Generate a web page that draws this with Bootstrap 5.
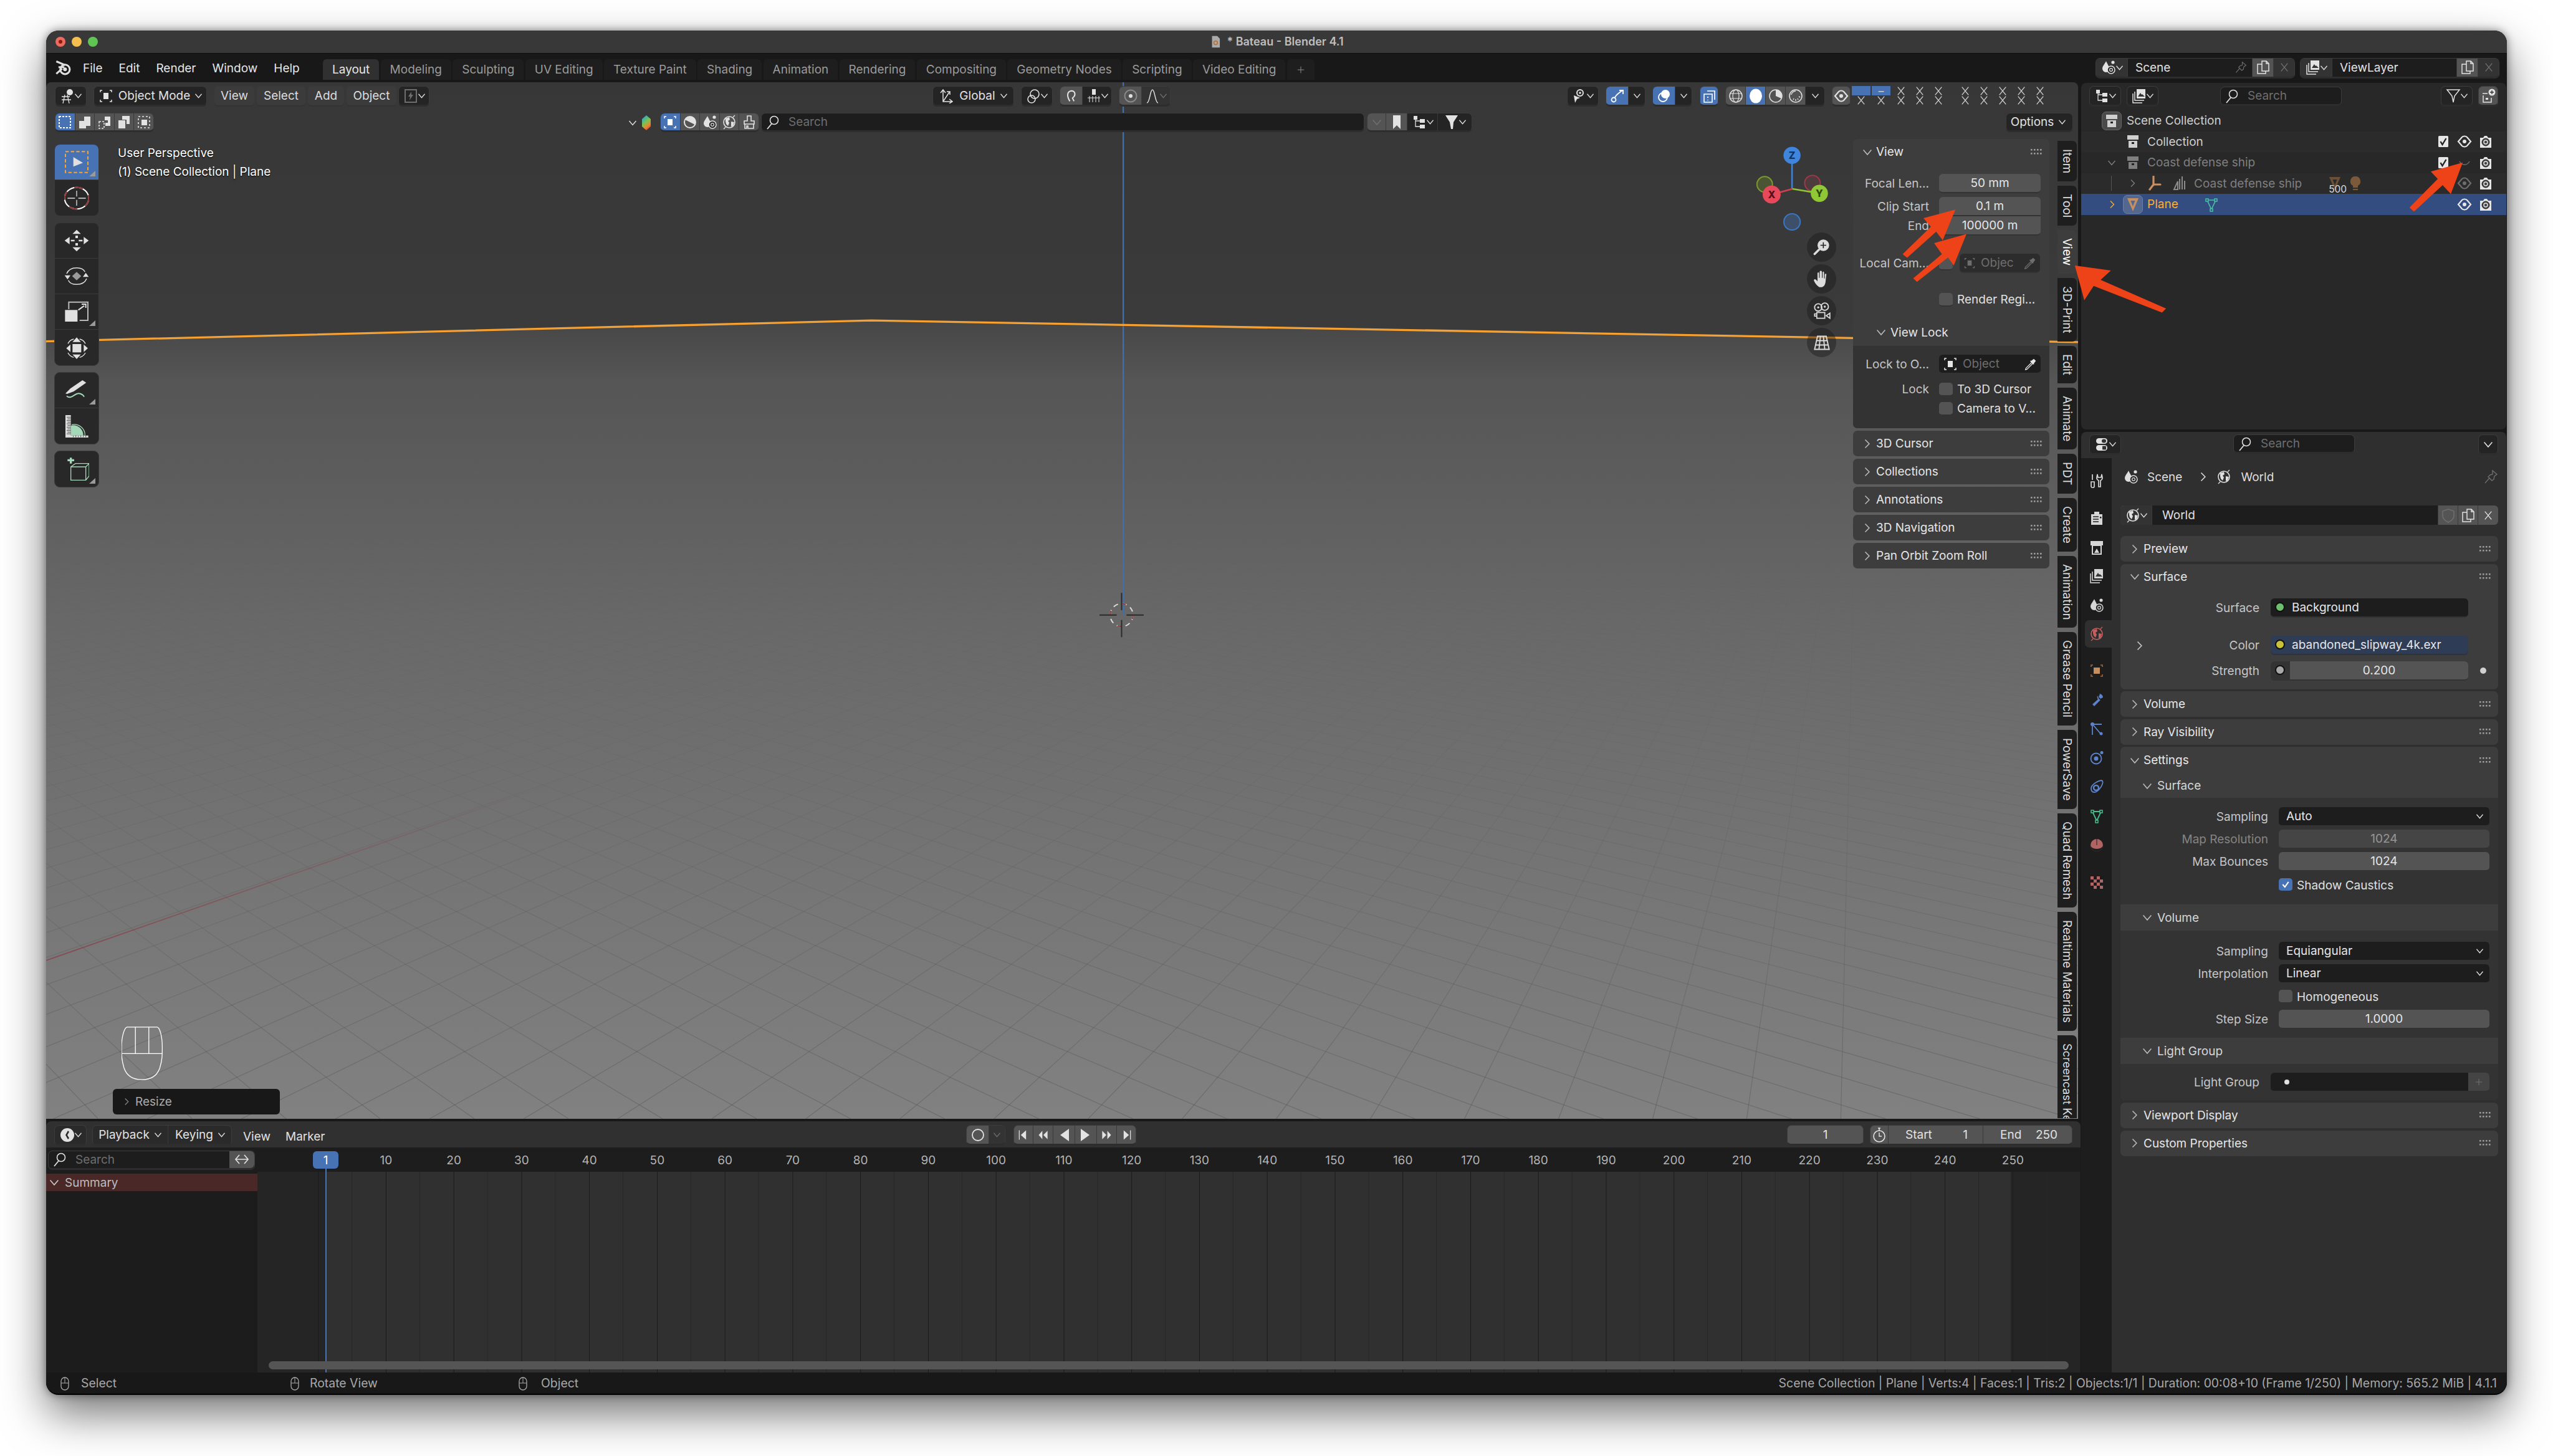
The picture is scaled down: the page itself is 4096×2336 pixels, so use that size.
<!DOCTYPE html>
<html lang="en">
<head>
<meta charset="utf-8">
<title>Bateau - Blender 4.1</title>
<link href="https://cdn.jsdelivr.net/npm/bootstrap@5.3.0/dist/css/bootstrap.min.css" rel="stylesheet">
<style>
html,body{width:4096px;height:2336px;margin:0;background:#fff;overflow:hidden}
body{font-family:Inter,"Liberation Sans",sans-serif;font-size:19px;line-height:1;color:#e0e0e0}
svg{display:block;flex:none}
.bl-win{position:absolute;left:74px;top:49px;width:3948px;height:2189px;border-radius:20px;overflow:hidden;background:#181818;box-shadow:0 30px 70px rgba(0,0,0,.55),0 0 14px rgba(0,0,0,.45);border-bottom:2px solid #000}
.bl-title{height:37px;background:#383838;border-bottom:1px solid #0d0d0d;position:relative;flex:none}
.tl{width:16px;height:16px;border-radius:50%;margin-right:10px}
.tl-r{background:#ed6a5f}.tl-y{background:#f5bf4f}.tl-g{background:#61c554}
.tl-r::after{content:"";display:block;width:6px;height:6px;border-radius:50%;background:#8c1a10;margin:5px}
.bl-wt{color:#bfbfbf;font-weight:600;font-size:18px}
.bl-top{height:46px;background:#181818;flex:none}
.tl-menu{width:444px;flex:none}
.mn{color:#e6e6e6;margin-right:26px}
.wtab{height:33px;margin-top:9px;padding:0 15px;margin-right:2.3px;border-radius:6px 6px 0 0;background:#1e1e1e;color:#9b9b9b;display:flex;align-items:center}
.wtab.on{background:#303030;color:#e6e6e6}
.c14{width:14px;height:14px}.c11{width:11px;height:11px}.c12{width:12px;height:12px}
.ic{width:24px;height:24px}.ic20{width:20px;height:20px}.ic28{width:28px;height:28px}.ic32{width:32px;height:32px}.ic40{width:40px;height:40px}
.hb{height:33px;background:#242424;border-radius:7px;border:1px solid #3c3c3c;border-bottom:3px solid #2d2d2d;display:flex;align-items:center;justify-content:center;color:#e2e2e2;flex:none;overflow:hidden}
.hm{height:33px;display:flex;align-items:center;justify-content:center;background:#3b3b3b;border-radius:6px;color:#dcdcdc;flex:none;border-bottom:2px solid #333}
.hc{height:100%;display:flex;align-items:center;justify-content:center;flex:none;border-right:1px solid #3a3a3a}
.hc:last-child{border-right:0}
.cg{background:#545454}.cb{background:#4772b3;color:#fff}.cd{background:#242424}.cn{background:#333}
.ho{height:31px}
.bl-main{flex:1 1 auto;min-height:0}
.bl-lc{width:3264px;flex:none}
.bl-vp{height:1663px;width:3260px;position:relative;overflow:hidden;border-radius:8px 8px 0 0;flex:none}
.bl-canvas{position:absolute;inset:0;width:100%;height:100%}
.vr1{height:33px;margin-top:6px;position:relative}
.vr2{height:31px;margin-top:10px;position:relative}
.sbx{height:31px;background:#1d1d1d;border-radius:7px;border:1px solid #3c3c3c;border-bottom:3px solid #2d2d2d;color:#e0e0e0;display:flex;align-items:center;flex:none}
.ph{color:#6e6e6e}
.xg{width:30px;height:15px;display:flex;justify-content:center;align-items:center;color:#ccc;flex:none}
.xg.bl{background:#4772b3;margin-right:2px}
.xg.sp{margin-left:13px}
.stage{height:1582px;position:relative;overflow:hidden}
.shelf{margin-left:13px;padding-top:19px;width:72px;flex:none}
.tg{background:#282828;border-radius:9px;border:1px solid #3a3a3a;margin-bottom:10px;overflow:hidden}
.tb{height:57px;display:flex;align-items:center;justify-content:center;border-bottom:1px solid #3a3a3a;position:relative;color:#e0e0e0}
.tb:last-child{border-bottom:0}
.tb.on{background:#4772b3}
.crn::after{content:"";position:absolute;right:5px;bottom:5px;width:10px;height:9px;background:#9a9a9a;clip-path:polygon(100% 0,100% 100%,0 100%)}
.vinfo{margin-left:30px;padding-top:19px;color:#fff;line-height:30px;text-shadow:0 1px 2px #000;white-space:nowrap}
.gz{position:absolute;left:2735px;top:10px;width:144px;height:158px}
.gnav{position:absolute;left:2825px;top:161px}
.gnb{width:47px;height:47px;border-radius:50%;background:rgba(24,24,24,.42);display:flex;align-items:center;justify-content:center;margin-bottom:4px;color:#dcdcdc}
.np{width:315px;padding-top:11px;flex:none;margin-left:auto}
.pnl{background:#3d3d3d;border-radius:7px;margin-bottom:4px;overflow:hidden}
.ph1{height:41px;display:flex;align-items:center;color:#e6e6e6;position:relative;padding-left:37px}
.ph1 .ch{position:absolute;left:16px;color:#bbb}
.grip{margin-left:auto;margin-right:11px;width:19px;height:10px}
.f31{height:31px;border-radius:6px;display:flex;align-items:center;justify-content:center;color:#e6e6e6;border-bottom:2px solid #333}
.fg{background:#545454}.fd{background:#1d1d1d}
.lab{color:#c6c6c6;text-align:right;white-space:nowrap}
.cbx{width:22px;height:22px;background:#545454;border-radius:5px;border-bottom:2px solid #333;flex:none;display:flex;align-items:center;justify-content:center}
.cbx.on{background:#4772b3}
.sub{background:#333}
.vt{writing-mode:vertical-rl;background:#1e1e1e;color:#dcdcdc;padding:13px 0;width:31px;margin-bottom:7px;border-radius:0 7px 7px 0;display:flex;align-items:center;justify-content:center;white-space:nowrap;flex:none}
.vt.on{background:#3d3d3d;color:#fff}
.vt.vt-end{padding-bottom:0;margin-bottom:0;font-size:18.4px}
.vtabs{width:31px;margin-left:13px;margin-right:2px;padding-top:14px;flex:none}
.mouse{position:absolute;left:121px;bottom:61px;width:66px;height:86px}
.rsz{position:absolute;left:107px;bottom:6px;width:268px;height:41px;background:#181818;border-radius:6px;display:flex;align-items:center;color:#aaa;padding-left:36px}
.rsz svg{position:absolute;left:17px;color:#888}
.bl-tl{margin-top:4px;flex:1 1 auto;min-height:0;background:#1c1c1c;border-radius:8px 8px 0 0;overflow:hidden}
.tl-h{height:42px;background:#303030;padding-top:6px;flex:none}
.tl-h .hb{background:#2a2a2a}
.tl-h .hb.cg{background:#545454}
.tl-l{width:339px;flex:none;background:#1c1c1c}
.tl-lft{width:1476px;flex:none}
.tl-r-col{position:relative;overflow:hidden;flex:1 1 auto}
.rul{height:39px;background:#1d1d1d;padding-top:1px}
.rl{width:108.75px;text-align:center;color:#b4b4b4;flex:none}
.fr{width:41px;height:28px;background:#4772b3;color:#fff;border-radius:6px;display:flex;align-items:center;justify-content:center;flex:none;margin-left:89px;margin-right:22px}
.tl-b{background-image:linear-gradient(90deg,#1a1a1a 1px,transparent 1px,transparent 54px,#272727 54px,#272727 55px,transparent 55px),linear-gradient(90deg,#252525 110px,#303030 110px,#303030 2813px,#252525 2813px);background-size:108.75px 100%,100% 100%;background-position:97.2px 0,0 0;background-repeat:repeat-x,no-repeat;flex:1 1 auto}
.phd{position:absolute;left:109px;top:34px;bottom:0;width:2px;background:#4772b3}
.tsc{position:absolute;left:18px;bottom:5px;width:2888px;height:13px;background:#555;border-radius:7px}
.sumr{height:28px;margin-top:3px;background:#4a2828;color:#bdbdbd;display:flex;align-items:center;padding-left:30px;position:relative}
.sumr svg{position:absolute;left:6px;color:#ccc}
.bl-st{height:34px;padding-top:2px;background:#181818;flex:none;color:#a8a8a8;font-size:19.4px}
.bl-rc{flex:1 1 auto;min-width:0;margin-left:1px;margin-right:1px}
.ol{height:556px;background:#282828;border-radius:8px;flex:none;overflow:hidden;margin-top:1px}
.olh{height:33px;margin-top:5px;position:relative}
.olb{margin-top:6px}
.or{height:33.5px;display:flex;align-items:center;color:#cfcfcf;background:#282828;position:relative}
.or.al{background:#2b2b2b}
.or.dm{color:#7f7f7f}
.or.sl{background:#334d80;color:#ffaf29}
.orr{margin-left:auto;margin-right:16px;display:flex}
.orr span{width:34px;display:flex;justify-content:center;color:#e6e6e6}
.orr span.ph{color:#6e6e6e}
.hibox{width:32px;height:30px;border-radius:7px;background:#4a4a4a;border:1px solid #666;display:flex;align-items:center;justify-content:center}
.hibox.b{background:#54688f;border-color:#6a7ea6}
.bn{position:relative}
.bn i{position:absolute;left:2px;bottom:-5px;font-style:normal;color:#ddd;font-size:15.5px}
.pr{margin-top:4px;flex:1 1 auto;min-height:0;background:#2f2f2f;border-radius:8px 8px 0 0;overflow:hidden}
.prh{height:42px;padding-top:4px;position:relative;flex:none}
.prt{width:49px;background:#1d1d1d;padding-top:13px;flex:none}
.pti{height:46.6px;display:flex;align-items:center;justify-content:center;color:#d6d6d6}
.pti.on{background:#2f2f2f;margin-left:6px;border-radius:7px 0 0 7px;height:44px;margin-top:1px;margin-bottom:1.6px;padding-right:6px}
.pg{margin-bottom:13.4px}
.prc{padding:0 13px 0 14px;width:633px}
.bc{height:60px;color:#dedede;margin-bottom:16px}
.idrow{height:31px;border-radius:6px;overflow:hidden;margin-bottom:18px;background:#545454}
.pnp{margin-bottom:3.6px}
.dot{width:16px;height:16px;border-radius:50%;border:2px solid #111;flex:none;margin-left:7px;margin-right:11px}
.r31{height:31px;display:flex}
.lw241{width:223px;margin-right:18px}
.lw254{width:237px;margin-right:17px}
.lr{line-height:31px}
.w317{width:317px}.w338{width:338px}
.sh{height:39px;display:flex;align-items:center;color:#d6d6d6;padding-left:59px;position:relative}
.sh svg{position:absolute;left:36px;color:#bbb}
.arrows{position:absolute;inset:0;width:100%;height:100%;pointer-events:none}
.w51{width:51px}.w182{width:182px}.w64{width:64px}.w78{width:78px}.w58{width:58px}.w80{width:80px}.w50{width:50px}.w131{width:131px}.w84{width:84px}.w83{width:83px}.w30{width:30px}.w160{width:160px}.w159{width:159px}.w968{width:968px}.w169{width:169px}.w108{width:108px}.w34{width:34px}.w320{width:320px}.w200{width:200px}.w32c{width:32px}.w40{width:40px}.w49{width:49px}.w196{width:196px}.w195{width:195px}.w36{width:36px}.w123{width:123px}.w325{width:325px}.w152{width:152px}.w143{width:143px}.w197{width:197px}.w63{width:63px}.w224{width:224px}.w122{width:122px}.w102{width:102px}.w52{width:52px}.w332{width:332px}.w25{width:25px}.w163{width:163px}
.ml2{margin-left:2px}.ml3{margin-left:3px}.ml4{margin-left:4px}.ml5{margin-left:5px}.ml6{margin-left:6px}.ml7{margin-left:7px}.ml8{margin-left:8px}.ml9{margin-left:9px}.ml10{margin-left:10px}.ml11{margin-left:11px}.ml12{margin-left:12px}.ml13{margin-left:13px}.ml14{margin-left:14px}.ml15{margin-left:15px}.ml16{margin-left:16px}.ml17{margin-left:17px}.ml18{margin-left:18px}.ml27{margin-left:27px}.ml28{margin-left:28px}.ml33{margin-left:33px}.ml41{margin-left:41px}.ml42{margin-left:42px}.ml43{margin-left:43px}.ml44{margin-left:44px}.ml48{margin-left:48px}.ml71{margin-left:71px}.ml762{margin-left:762px}.ml807{margin-left:807px}.ml636{margin-left:636px}.ml138{margin-left:138px}
.mr13{margin-right:13px}.mr16{margin-right:16px}
.mt15{margin-top:15px}.mt6{margin-top:6px}
.vl{width:1px;height:24px;background:#555}
.kw{justify-content:space-between;padding:0 24px 0 27px}
.txt-left{justify-content:flex-start;padding-left:12px}
.mt5{margin-top:5px}.mt10{margin-top:10px}
.lcam{margin-top:29px}.lc-f{width:129px;margin-left:11px;padding:0 6px;background:#2c2c2c}
.rreg{margin-top:32px;line-height:22px}.lr2{line-height:22px}
.vlockh{height:63px;display:flex;align-items:center;color:#e6e6e6;padding-left:60px;position:relative;padding-top:20px}
.vlockh svg{position:absolute;left:38px;top:34px;color:#bbb}
.vlock{padding:14px 0 20px}
.lk1{margin-top:14px}.lk2{margin-top:9px}
.lkf{padding:0 6px}
.olsr{margin-left:99px}.prsr{margin-left:180px}
.srf1{margin-top:14px}.srf2{margin-top:29px}.srf3{margin-top:10px;margin-bottom:14px;align-items:center}
.col-ch{position:absolute;left:24px;top:9px;color:#ccc}
.colf{background:#2f3c55}
.dg{background:#6dbf6d}.dy{background:#c7c13c}.dgr{background:#a8a8a8;margin-right:0}
.strc{width:31px;height:100%;background:#333;display:flex;align-items:center}
.sdot{width:10px;height:10px;border-radius:50%;background:#d0d0d0;margin-left:19px}
.sth{height:43px}
.sb1{padding:15px 0 20px}.chk{margin-top:11px;margin-left:254px}
.sh2{height:42px}.sh3{height:42px}
.sb2{padding:18px 0 14px}.chk2{margin-top:10px;margin-left:254px}
.sb3{padding:14px 0 13px}
.drp{justify-content:space-between;padding:0 10px 0 12px}
.dim3{opacity:.55}
.lgdot{width:8px;height:8px;border-radius:50%;background:#e0e0e0;margin-left:22px}
.cgp{background:#444;width:34px;color:#777}
.st1{width:331px}.st3{width:330px}
.flex-none{flex:none}.min-h-0{min-height:0}
.tabw{color:#c26060}
.gap10{gap:10px}
</style>
</head>
<body>
<svg width="0" height="0" class="position-absolute">
<defs>
<linearGradient id="gm" x1=".25" y1="0" x2=".75" y2="1"><stop offset="0" stop-color="#2aa4d6"/><stop offset=".45" stop-color="#7cc44a"/><stop offset=".75" stop-color="#f08030"/><stop offset="1" stop-color="#d93030"/></linearGradient>
<symbol id="dn" viewBox="0 0 24 24"><path d="M1 6l11 13L23 6" fill="none" stroke="currentColor" stroke-width="2.800"/></symbol>
<symbol id="rt" viewBox="0 0 24 24"><path d="M6 1l11 11L6 23" fill="none" stroke="currentColor" stroke-width="2.600"/></symbol>
<symbol id="xx" viewBox="0 0 24 24"><path d="M3 1l18 22M21 1L3 23" fill="none" stroke="currentColor" stroke-width="2.400"/></symbol>
<symbol id="sr" viewBox="0 0 24 24"><circle cx="14" cy="9" r="6.5" fill="none" stroke="currentColor" stroke-width="1.6"/><path d="M10 14.5L3 23" stroke="currentColor" stroke-width="1.8"/></symbol>
<symbol id="logo" viewBox="0 0 24 24"><path d="M2 3l12 5M5 11h8M2 20l8-7" fill="none" stroke="currentColor" stroke-width="2.6"/><circle cx="14" cy="14" r="6.5" fill="none" stroke="currentColor" stroke-width="2.6"/><circle cx="14" cy="14" r="2.6" fill="currentColor"/></symbol>
<symbol id="v3d" viewBox="0 0 24 24"><circle cx="16" cy="6" r="5" fill="currentColor"/><path d="M3 13h13M3 18h15M8 10L5 24M12 10l3 14" fill="none" stroke="currentColor" stroke-width="1.3"/></symbol>
<symbol id="obm" viewBox="0 0 24 24"><rect x="8" y="7" width="8" height="10" fill="currentColor"/><path d="M6 3H3v3M18 3h3v3M6 21H3v-3M18 21h3v-3" fill="none" stroke="currentColor" stroke-width="1.5"/></symbol>
<symbol id="bolt" viewBox="0 0 24 24"><path d="M3 2h18v20H3z" fill="none" stroke="currentColor" stroke-width="2"/><path d="M13 5l-5 8h3l-1 6 6-9h-3z" fill="currentColor"/></symbol>
<symbol id="s1" viewBox="0 0 24 24"><rect x="3" y="3" width="18" height="18" fill="none" stroke="currentColor" stroke-width="2" stroke-dasharray="3 2"/></symbol>
<symbol id="s2" viewBox="0 0 24 24"><path d="M11 3h10v15h-7v4H3V10h8z" fill="currentColor"/></symbol>
<symbol id="s3" viewBox="0 0 24 24"><path d="M12 3h9v15h-8v-5h4V9h-5z" fill="currentColor"/><path d="M3 11h8v11H3z" fill="none" stroke="currentColor" stroke-width="1.6" stroke-dasharray="3 2"/></symbol>
<symbol id="s4" viewBox="0 0 24 24"><path d="M9 2h12v13h-5V8H9zM3 9h11v13H3z" fill="currentColor"/></symbol>
<symbol id="s5" viewBox="0 0 24 24"><rect x="8" y="8" width="9" height="9" fill="currentColor"/><rect x="3" y="3" width="18" height="18" fill="none" stroke="currentColor" stroke-width="1.6" stroke-dasharray="3 3"/></symbol>
<symbol id="gem" viewBox="0 0 24 24"><polygon points="12,0 19,6 19,18 12,24 5,18 5,6" fill="url(#gm)"/></symbol>
<symbol id="m2" viewBox="0 0 24 24"><circle cx="12" cy="12" r="9" fill="none" stroke="currentColor" stroke-width="2"/><path d="M12 3a9 9 0 0 1 8 13l-8-4z M4 8a9 9 0 0 1 8-5v9z" fill="currentColor"/></symbol>
<symbol id="sc" viewBox="0 0 24 24"><path d="M8 2c1 3 5 8 5 12 0 3-2 6-5 6s-6-3-6-6c0-4 5-9 6-12z" fill="currentColor"/><circle cx="19" cy="4" r="2.6" fill="currentColor"/><circle cx="16" cy="16" r="6" fill="#282828" stroke="currentColor" stroke-width="1.5"/><circle cx="16" cy="16" r="2.4" fill="none" stroke="currentColor" stroke-width="1.2"/></symbol>
<symbol id="wd" viewBox="0 0 24 24"><circle cx="12" cy="12" r="9" fill="none" stroke="currentColor" stroke-width="1.6"/><path d="M6 6l6-2 1 4-3 2 2 3-2 5-3-3-1-4zM15 11l5 1-2 6-3 1z" fill="currentColor"/><path d="M3 23l3-3M21 1l-3 3" stroke="currentColor" stroke-width="1.4"/></symbol>
<symbol id="br" viewBox="0 0 24 24"><path d="M9 2h6v8h5v5H4v-5h5zM5 15v7h3v-4h2v4h9v-7" fill="none" stroke="currentColor" stroke-width="1.6"/></symbol>
<symbol id="axes" viewBox="0 0 24 24"><path d="M6 3v18h14M6 21L16 6M2 7l4-5 4 5M16 17l5 4-5 3M12 5h5v5" fill="none" stroke="currentColor" stroke-width="1.5"/></symbol>
<symbol id="pv" viewBox="0 0 24 24"><circle cx="14" cy="9" r="7" fill="none" stroke="currentColor" stroke-width="1.6"/><circle cx="9" cy="17" r="6" fill="none" stroke="currentColor" stroke-width="1.6"/></symbol>
<symbol id="mg" viewBox="0 0 24 24"><path d="M9 22C3 13 3 3 12 2c7 0 8 7 5 11l-3 3 3 6" fill="none" stroke="currentColor" stroke-width="2.4"/></symbol>
<symbol id="sg" viewBox="0 0 24 24"><rect x="9" y="1" width="6" height="9" fill="currentColor"/><path d="M2 15h20M5 12v10M10 12v10M15 12v10M20 12v10" fill="none" stroke="currentColor" stroke-width="1"/></symbol>
<symbol id="pf" viewBox="0 0 24 24"><circle cx="12" cy="12" r="9.5" fill="none" stroke="#8a8a8a" stroke-width="2"/><circle cx="12" cy="12" r="3" fill="currentColor"/></symbol>
<symbol id="fo" viewBox="0 0 24 24"><path d="M3 23c5 0 5-21 9-21s4 21 9 21" fill="none" stroke="currentColor" stroke-width="1.5"/></symbol>
<symbol id="bk" viewBox="0 0 24 24"><path d="M6 1h12v22l-6-6-6 6z" fill="currentColor"/></symbol>
<symbol id="tr" viewBox="0 0 24 24"><path d="M3 2h6v6H3zM13 7h8v6h-8zM13 16h8v6h-8z" fill="currentColor"/><path d="M6 8v11h7M6 10h7" fill="none" stroke="currentColor" stroke-width="1.3"/></symbol>
<symbol id="fn" viewBox="0 0 24 24"><path d="M2 1h20l-7 11-1 11-3 0-2-11z" fill="currentColor"/></symbol>
<symbol id="fo2" viewBox="0 0 24 24"><path d="M2 2h20l-8 10-2 10-2-10z" fill="none" stroke="currentColor" stroke-width="1.5"/></symbol>
<symbol id="vs" viewBox="0 0 24 24"><circle cx="13" cy="7" r="5" fill="none" stroke="currentColor" stroke-width="2"/><circle cx="13" cy="7" r="1.8" fill="currentColor"/><path d="M3 11l2 12 3-6 5-2z" fill="currentColor"/></symbol>
<symbol id="gi" viewBox="0 0 24 24"><circle cx="6" cy="18" r="3.5" fill="none" stroke="currentColor" stroke-width="1.8"/><path d="M8 15C9 10 14 8 20 3M15 3h6v6" fill="none" stroke="currentColor" stroke-width="1.8"/></symbol>
<symbol id="ov" viewBox="0 0 24 24"><circle cx="14" cy="9" r="7" fill="currentColor"/><circle cx="10" cy="14" r="7" fill="none" stroke="currentColor" stroke-width="1.8"/></symbol>
<symbol id="xr" viewBox="0 0 24 24"><path d="M4 9h13v13H4zM9 4h12v14" fill="none" stroke="currentColor" stroke-width="1.6"/><path d="M10 13v2M10 18v1" stroke="currentColor" stroke-width="1.8"/></symbol>
<symbol id="wi" viewBox="0 0 24 24"><circle cx="12" cy="12" r="10" fill="none" stroke="currentColor" stroke-width="1.5"/><ellipse cx="12" cy="12" rx="5" ry="10" fill="none" stroke="currentColor" stroke-width="1.2"/><path d="M2 8h20M2 16h20" stroke="currentColor" stroke-width="1.2"/></symbol>
<symbol id="so" viewBox="0 0 24 24"><ellipse cx="12" cy="12" rx="10" ry="11.5" fill="currentColor"/></symbol>
<symbol id="ma" viewBox="0 0 24 24"><circle cx="12" cy="12" r="10" fill="none" stroke="currentColor" stroke-width="1.5"/><path d="M12 2a10 10 0 0 1 9 14l-9-4z" fill="currentColor"/></symbol>
<symbol id="rn" viewBox="0 0 24 24"><circle cx="12" cy="12" r="10" fill="none" stroke="currentColor" stroke-width="1.5"/><path d="M5 10a7 7 0 0 1 7-6M8 18l1-2M12 20v-3M16 18l-1-2M19 14l-2-1" fill="none" stroke="currentColor" stroke-width="1.4"/></symbol>
<symbol id="ey" viewBox="0 0 24 24"><path d="M2 12L8 5c2-2 6-2 8 0l6 7-6 7c-2 2-6 2-8 0z" fill="none" stroke="currentColor" stroke-width="2.2"/><circle cx="12" cy="12" r="3" fill="currentColor"/></symbol>
<symbol id="eyc" viewBox="0 0 24 24"><path d="M4 10c4 7 12 7 16 0" fill="none" stroke="currentColor" stroke-width="1.4"/></symbol>
<symbol id="ly" viewBox="0 0 24 24"><path d="M8 1h14v15H8z" fill="currentColor"/><path d="M10 13l4-6 2 3 1-1 4 4z" fill="#333"/><path d="M5 5v14h15M2 8v15h15" fill="none" stroke="currentColor" stroke-width="1.5"/></symbol>
<symbol id="cp" viewBox="0 0 24 24"><path d="M10 2h7l4 4v12H10zM17 2v4h4M10 7H3v15h13v-4" fill="none" stroke="currentColor" stroke-width="1.5"/></symbol>
<symbol id="pn" viewBox="0 0 24 24"><path d="M15 2l7 6-4 3-1 5-3 2-6-6 3-3 4-1zM10 14l-7 8" fill="none" stroke="currentColor" stroke-width="1.4"/></symbol>
<symbol id="nc" viewBox="0 0 24 24"><path d="M3 8h8M4 11v11h13v-7" fill="none" stroke="currentColor" stroke-width="1.5"/><rect x="8" y="15" width="4" height="3" fill="currentColor"/><circle cx="18" cy="6" r="5.5" fill="currentColor"/><path d="M18 3v6M15 6h6" stroke="#333" stroke-width="1.4"/></symbol>
<symbol id="co" viewBox="0 0 24 24"><path d="M3 2h18v7H3zM5 11h14v11H5z" fill="currentColor"/><rect x="10" y="13" width="4" height="3" fill="#222"/></symbol>
<symbol id="ck" viewBox="0 0 24 24"><rect x="4" y="3" width="16" height="18" rx="1.5" fill="#e6e6e6"/><path d="M7.5 12l3 5 6-10" fill="none" stroke="#222" stroke-width="2.4"/></symbol>
<symbol id="ckw" viewBox="0 0 24 24"><path d="M4 12l6 7 10-14" fill="none" stroke="#fff" stroke-width="3.500"/></symbol>
<symbol id="cm" viewBox="0 0 24 24"><path d="M3 6h5l2-3h4l2 3h5v16H3z" fill="currentColor"/><circle cx="12" cy="13" r="6" fill="#444" stroke="#222" stroke-width="1"/><circle cx="12" cy="13" r="3" fill="none" stroke="currentColor" stroke-width="1.4"/></symbol>
<symbol id="em" viewBox="0 0 24 24"><path d="M10 1v14M10 14l-6 8M10 14h11" fill="none" stroke="#c98f63" stroke-width="3.2" stroke-linecap="round"/></symbol>
<symbol id="ar" viewBox="0 0 24 24"><path d="M3 22L9 9v13zM12 22V5M16 22V1M20 22V8" fill="none" stroke="#8a8a8a" stroke-width="2"/></symbol>
<symbol id="ti" viewBox="0 0 24 24"><path d="M3 2h18l-9 21zM8.5 6l3.5 9 3.500-9z" fill="#c58f60" fill-rule="evenodd"/></symbol>
<symbol id="me" viewBox="0 0 24 24"><path d="M5 5h14l-7 15z" fill="none" stroke="#45c2a4" stroke-width="1.6"/><path d="M3 3h4v4H3zM17 3h4v4h-4zM10 19h4v4h-4z" fill="#334d80" stroke="#45c2a4" stroke-width="1.5"/></symbol>
<symbol id="meg" viewBox="0 0 24 24"><path d="M5 5h14l-7 15z" fill="none" stroke="#45c08f" stroke-width="1.8"/><path d="M3 3h4v4H3zM17 3h4v4h-4zM10 19h4v4h-4z" fill="#1d1d1d" stroke="#45c08f" stroke-width="1.5"/></symbol>
<symbol id="bu" viewBox="0 0 24 24"><path d="M12 1a8 8 0 0 1 4 15v3H8v-3a8 8 0 0 1 4-15zM8 21h8v2H8z" fill="#7b5a3c"/></symbol>
<symbol id="tri2" viewBox="0 0 24 24"><path d="M3 2h18l-9 21zM8.500 6l3.500 9 3.500-9z" fill="#6b4f36" fill-rule="evenodd"/></symbol>
<symbol id="pr" viewBox="0 0 24 24"><rect x="3" y="2" width="18" height="9" rx="4.500" fill="currentColor"/><rect x="12" y="3.500" width="7" height="6" rx="3" fill="#333"/><rect x="3" y="13" width="18" height="9" rx="4.500" fill="currentColor"/><rect x="13" y="14.500" width="6" height="6" rx="1" fill="#333"/></symbol>
<symbol id="to" viewBox="0 0 24 24"><path d="M5 2v9M3 14h5v7a2 2 0 0 1-5 0zM13 2l-1 5a5 5 0 0 0 3 5v10h3V12a5 5 0 0 0 3-5l-1-5-1 5h-5z" fill="none" stroke="currentColor" stroke-width="1.700"/></symbol>
<symbol id="rd" viewBox="0 0 24 24"><path d="M3 6h18v17H3z M8 2h8v4H8z" fill="currentColor"/><path d="M6 10h9M6 14h9M6 18h9" stroke="#222" stroke-width="1.500"/><rect x="17" y="10" width="2.500" height="2.500" fill="#222"/></symbol>
<symbol id="ou" viewBox="0 0 24 24"><path d="M2 2h20v7H2z" fill="currentColor"/><path d="M5 9h14v14H5z" fill="none" stroke="currentColor" stroke-width="2"/><path d="M8 21l4-7 4 7z" fill="currentColor"/></symbol>
<symbol id="ob" viewBox="0 0 24 24"><rect x="7" y="7" width="10" height="10" fill="#c58f60"/><path d="M6 3H3v3M18 3h3v3M6 21H3v-3M18 21h3v-3" fill="none" stroke="#a06a3c" stroke-width="1.600"/></symbol>
<symbol id="wr" viewBox="0 0 24 24"><path d="M16 2a6 6 0 0 1 6 6l-4 2-3-3 2-4zM15 10l-10 9 3 3 10-10z M13 5a6 6 0 0 0 4 8z" fill="#5c83cc"/></symbol>
<symbol id="pa" viewBox="0 0 24 24"><circle cx="5" cy="5" r="3" fill="#5c83cc"/><path d="M7 5h13M5 8v14M7 7l11 13" fill="none" stroke="#5c83cc" stroke-width="1.800"/><circle cx="19" cy="20" r="2.500" fill="#5c83cc"/></symbol>
<symbol id="phy" viewBox="0 0 24 24"><circle cx="11" cy="13" r="8.500" fill="none" stroke="#5c83cc" stroke-width="1.800"/><circle cx="11" cy="13" r="3.500" fill="#5c83cc"/><circle cx="20" cy="3.500" r="2.500" fill="#5c83cc"/></symbol>
<symbol id="cn" viewBox="0 0 24 24"><path d="M3 15c0-6 10-12 16-13 3 0 3 4 2 6-2 6-8 13-13 13-3 0-5-2-5-6z" fill="none" stroke="#5c83cc" stroke-width="1.800"/><circle cx="11" cy="14" r="4" fill="none" stroke="#5c83cc" stroke-width="2.500"/></symbol>
<symbol id="mt" viewBox="0 0 24 24"><circle cx="12" cy="12" r="10" fill="#b26464"/><path d="M2 12a10 6 0 0 0 20 0 10 10 0 0 1-20 0z" fill="#1d1d1d"/><path d="M12 2v10" stroke="#1d1d1d" stroke-width="1"/></symbol>
<symbol id="tx" viewBox="0 0 24 24"><rect x="2" y="2" width="20" height="20" fill="#b26464"/><path d="M7 2h5v5H7zM17 2h5v5h-5zM2 7h5v5H2zM12 7h5v5h-5zM7 12h5v5H7zM17 12h5v5h-5zM2 17h5v5H2zM12 17h5v5h-5z" fill="#1a1a1a"/></symbol>
<symbol id="shd" viewBox="0 0 24 24"><path d="M12 2l9 3v8c0 5-5 8-9 10-4-2-9-5-9-10V5z" fill="none" stroke="currentColor" stroke-width="1.600"/></symbol>
<symbol id="dr" viewBox="0 0 24 24"><path d="M14 9L3 20l-1 3 3-1 11-11z" fill="none" stroke="currentColor" stroke-width="1.500"/><path d="M13 6l5-4 4 4-4 5 1 1-2 1-6-6 1-2z" fill="currentColor"/></symbol>
<symbol id="zm" viewBox="0 0 24 24"><circle cx="14" cy="9" r="8" fill="currentColor"/><path d="M8 15l-6 6" stroke="currentColor" stroke-width="3" stroke-linecap="round"/><path d="M14 5v8M10 9h8" stroke="#222" stroke-width="1.400"/></symbol>
<symbol id="hd" viewBox="0 0 24 24"><path d="M6 21c-2-2-5-6-5-8 1-2 3-1 5 2V4c0-2 2-2 2 0v6h1V2c0-2 3-2 3 0v8h1V3c0-2 2-2 2 0v8h1V6c0-2 3-2 2 0l-1 10c-1 5-3 7-7 7-2 0-3-1-4-2z" fill="currentColor"/></symbol>
<symbol id="cv" viewBox="0 0 24 24"><circle cx="7" cy="7" r="5" fill="none" stroke="currentColor" stroke-width="1.600"/><circle cx="16" cy="6" r="5" fill="none" stroke="currentColor" stroke-width="1.600"/><circle cx="7" cy="7" r="1.400" fill="currentColor"/><circle cx="16" cy="6" r="1.400" fill="currentColor"/><path d="M5 14h11v8H5zM2 16h3v3H2zM23 15l-5 3.500 5 3.500z" fill="none" stroke="currentColor" stroke-width="1.500"/></symbol>
<symbol id="gd" viewBox="0 0 24 24"><path d="M6 3h12l4 18H2zM10 3L8 21M14 3l2 18M4 9h16M3 15h18" fill="none" stroke="currentColor" stroke-width="1.600"/></symbol>
<symbol id="grp" viewBox="0 0 19 10"><g fill="#9a9a9a"><rect x="0" y="0" width="2.600" height="2.600"/><rect x="5" y="0" width="2.600" height="2.600"/><rect x="10" y="0" width="2.600" height="2.600"/><rect x="15" y="0" width="2.600" height="2.600"/><rect x="0" y="6" width="2.600" height="2.600"/><rect x="5" y="6" width="2.600" height="2.600"/><rect x="10" y="6" width="2.600" height="2.600"/><rect x="15" y="6" width="2.600" height="2.600"/></g></symbol>
<symbol id="t1" viewBox="0 0 60 60"><rect x="3" y="5" width="54" height="50" fill="none" stroke="#f5a533" stroke-width="3" stroke-dasharray="8 5"/><path d="M22 18l23 14-23 9z" fill="#e0e0e0"/></symbol>
<symbol id="t2" viewBox="0 0 60 60"><ellipse cx="30" cy="30" rx="29" ry="26" fill="none" stroke="#fff" stroke-width="3"/><ellipse cx="30" cy="30" rx="29" ry="26" fill="none" stroke="#8f3a3a" stroke-width="3.200" stroke-dasharray="21 20"/><path d="M30 12v14M30 34v14M8 30h18M34 30h18" stroke="#ddd" stroke-width="2"/></symbol>
<symbol id="t3" viewBox="0 0 60 60"><path d="M30 4l10 10H20zM30 56l-10-10h20zM1 30l12-9v18zM59 30l-12-9v18z" fill="currentColor"/><path d="M27 18h6v6h-6zM27 36h6v6h-6zM16 28h9v4h-9zM35 28h9v4h-9z" fill="currentColor"/></symbol>
<symbol id="t4" viewBox="0 0 60 60"><path d="M30 20l11 10-11 10-11-10z" fill="#9a9a9a"/><path d="M6 24C10 14 20 10 30 10c10 0 17 3 20 10M54 36c-4 10-14 14-24 14-10 0-17-3-20-10" fill="none" stroke="currentColor" stroke-width="2.200"/><path d="M1 28h14l-7 10zM59 32H45l7-10z" fill="currentColor"/></symbol>
<symbol id="t5" viewBox="0 0 60 60"><path d="M11 24V7h46v44H37" fill="none" stroke="#b8b8b8" stroke-width="3"/><rect x="2" y="26" width="30" height="28" fill="currentColor"/><path d="M34 26l14-10M42 12h10v9" fill="none" stroke="currentColor" stroke-width="3"/></symbol>
<symbol id="t6" viewBox="0 0 60 60"><rect x="20" y="21" width="21" height="20" fill="currentColor"/><path d="M30 5l10 11H20zM30 57L20 46h20zM5 31l10-9v18zM57 31l-10-9v18z" fill="currentColor"/><path d="M9 20C13 12 18 10 23 9M37 9c5 1 10 3 14 11M51 42c-4 8-9 10-14 11M23 53c-5-1-10-3-14-11" fill="none" stroke="currentColor" stroke-width="2"/></symbol>
<symbol id="t7" viewBox="0 0 60 60"><path d="M44 6l9 6-30 21-16 6-4-1 12-12z" fill="currentColor"/><path d="M6 44c10 10 20-8 30-6 6 1 10 4 12 8" fill="none" stroke="#a4d8b8" stroke-width="3"/></symbol>
<symbol id="t8" viewBox="0 0 60 60"><path d="M16 52V28a24 24 0 0 1 30 24z" fill="#a4d8b8"/><path d="M18 26a26 26 0 0 1 32 26" fill="none" stroke="#a4d8b8" stroke-width="2"/><path d="M3 3h13v49h42v5H3z" fill="#ddd"/><path d="M6 8h10M8 12h8M6 16h10M8 20h8M6 24h10M8 28h8M6 32h10M8 36h8M6 40h10M8 44h8M6 48h10M22 56v-3M28 56v-4M34 56v-3M40 56v-4M46 56v-3M52 56v-4" stroke="#282828" stroke-width="1.200"/></symbol>
<symbol id="t9" viewBox="0 0 60 60"><path d="M8 8h16M16 2v14" stroke="#a4d8b8" stroke-width="5"/><path d="M16 24h36v32H16zM16 24l11-8h33l-8 8M60 16v30l-8 10" fill="none" stroke="#a4d8b8" stroke-width="2"/></symbol>
<symbol id="jb" viewBox="0 0 24 24"><path d="M4 3v18" stroke="currentColor" stroke-width="1.500"/><path d="M7 12l10-9v18z" fill="currentColor"/></symbol>
<symbol id="kb" viewBox="0 0 24 24"><path d="M12 12l8-8v16zM3 12l7-8v16z" fill="currentColor"/></symbol>
<symbol id="pb" viewBox="0 0 24 24"><path d="M6 12L20 2v20z" fill="currentColor"/></symbol>
<symbol id="pf2" viewBox="0 0 24 24"><path d="M18 12L4 2v20z" fill="currentColor"/></symbol>
<symbol id="kf" viewBox="0 0 24 24"><path d="M12 12L4 4v16zM21 12l-7-8v16z" fill="currentColor"/></symbol>
<symbol id="jf" viewBox="0 0 24 24"><path d="M20 3v18" stroke="currentColor" stroke-width="1.500"/><path d="M17 12L7 3v18z" fill="currentColor"/></symbol>
<symbol id="rec" viewBox="0 0 24 24"><circle cx="12" cy="12" r="9" fill="none" stroke="currentColor" stroke-width="1.800"/></symbol>
<symbol id="sw" viewBox="0 0 24 24"><path d="M10 1h4M12 1v4" stroke="currentColor" stroke-width="1.600"/><circle cx="12" cy="14" r="9" fill="none" stroke="currentColor" stroke-width="1.600"/><path d="M12 8v6h4" fill="none" stroke="currentColor" stroke-width="1.400"/></symbol>
<symbol id="tm" viewBox="0 0 24 24"><circle cx="12" cy="12" r="11" fill="currentColor"/><path d="M13 5l-4 7 4 7 2-2-3-5 3-5z" fill="#2a2a2a"/></symbol>
<symbol id="lr" viewBox="0 0 24 24"><path d="M8 5l-6 7 6 7M16 5l6 7-6 7M2 12h20" fill="none" stroke="currentColor" stroke-width="1.700"/></symbol>
<symbol id="ms" viewBox="0 0 24 24"><rect x="6" y="2" width="12" height="20" rx="6" fill="none" stroke="currentColor" stroke-width="1.300"/><path d="M6 11h12M12 2v9" stroke="currentColor" stroke-width="1"/></symbol>
<symbol id="fl" viewBox="0 0 24 24"><path d="M5 1h10l5 5v17H5z" fill="#aaa"/><circle cx="12" cy="14" r="3.500" fill="none" stroke="#c76a1d" stroke-width="1.800"/></symbol>
<symbol id="pls" viewBox="0 0 24 24"><path d="M12 3v18M3 12h18" stroke="currentColor" stroke-width="1.500"/></symbol>
</defs>
</svg>

<div class="bl-win d-flex flex-column">
  <div class="bl-title d-flex align-items-center">
    <div class="d-flex ml15 position-relative">
      <span class="tl tl-r"></span><span class="tl tl-y"></span><span class="tl tl-g"></span>
    </div>
    <div class="position-absolute top-50 start-50 translate-middle d-flex align-items-center gap-2 bl-wt"><svg class="ic20"><use href="#fl"/></svg><span>* Bateau - Blender 4.1</span></div>
  </div>

  <div class="bl-top d-flex">
    <div class="d-flex align-items-center tl-menu">
      <svg class="ic28 ml14"><use href="#logo"/></svg>
      <span class="mn ml17">File</span><span class="mn">Edit</span><span class="mn">Render</span><span class="mn">Window</span><span class="mn">Help</span>
    </div>
    <div class="d-flex">
      <div class="wtab on">Layout</div><div class="wtab">Modeling</div><div class="wtab">Sculpting</div><div class="wtab">UV Editing</div><div class="wtab">Texture Paint</div><div class="wtab">Shading</div><div class="wtab">Animation</div><div class="wtab">Rendering</div><div class="wtab">Compositing</div><div class="wtab">Geometry Nodes</div><div class="wtab">Scripting</div><div class="wtab">Video Editing</div><div class="wtab"><svg class="c14"><use href="#pls"/></svg></div>
    </div>
    <div class="ms-auto d-flex align-items-center gap-2 me-2 pe-1 mt-0">
      <div class="hb w320 cd">
        <div class="hc w51 cn"><svg class="ic"><use href="#sc"/></svg><svg class="c11"><use href="#dn"/></svg></div>
        <div class="hc w200 txt-left fd"><span class="flex-grow-1">Scene</span><svg class="ic20 me-2 ph"><use href="#pn"/></svg></div>
        <div class="hc w34 cg"><svg class="ic"><use href="#cp"/></svg></div>
        <div class="hc flex-grow-1 cn ph"><svg class="c14"><use href="#xx"/></svg></div>
      </div>
      <div class="hb w320 cd">
        <div class="hc w51 cn"><svg class="ic"><use href="#ly"/></svg><svg class="c11"><use href="#dn"/></svg></div>
        <div class="hc w200 txt-left fd">ViewLayer</div>
        <div class="hc w34 cg"><svg class="ic"><use href="#cp"/></svg></div>
        <div class="hc flex-grow-1 cn ph"><svg class="c14"><use href="#xx"/></svg></div>
      </div>
    </div>
  </div>

  <div class="bl-main d-flex">
    <div class="bl-lc d-flex flex-column">
      <div class="bl-vp">
        <svg class="bl-canvas" id="vpc" viewBox="113 202 4967 2533" preserveAspectRatio="none">
          <defs>
            <linearGradient id="gr" x1="0" y1="790" x2="0" y2="2735" gradientUnits="userSpaceOnUse"><stop offset="0" stop-color="#474747"/><stop offset=".07" stop-color="#555"/><stop offset=".37" stop-color="#686868"/><stop offset="1" stop-color="#808180"/></linearGradient>
            <linearGradient id="skyg" x1="0" y1="202" x2="0" y2="830" gradientUnits="userSpaceOnUse"><stop offset="0" stop-color="#373737"/><stop offset="1" stop-color="#3b3b3b"/></linearGradient>
            <linearGradient id="gl" x1="0" y1="850" x2="0" y2="2735" gradientUnits="userSpaceOnUse"><stop offset="0" stop-color="#555" stop-opacity="0"/><stop offset=".5" stop-color="#555" stop-opacity=".1"/><stop offset="1" stop-color="#555" stop-opacity=".45"/></linearGradient>
            <linearGradient id="rx" x1="113" y1="0" x2="1400" y2="0" gradientUnits="userSpaceOnUse"><stop offset="0" stop-color="#8a3c48" stop-opacity=".75"/><stop offset="1" stop-color="#8a3c48" stop-opacity="0"/></linearGradient>
          </defs>
          <rect x="113" y="202" width="4967" height="2533" fill="url(#skyg)"/>
          <polygon points="113,835 2130,784 4531,827 5080,837 5080,2735 113,2735" fill="url(#gr)"/>
          <g id="gridl"></g>
          <path d="M113 2348L1400 1898" stroke="url(#rx)" stroke-width="3" fill="none"/>
          <path d="M2746 202V1504" stroke="#3f6fb0" stroke-width="3.500"/>
          <polyline points="113,835 2130,784 4531,827 5080,837" fill="none" stroke="#f5a033" stroke-width="5"/>
          <ellipse cx="2742" cy="1504" rx="28" ry="28" fill="none" stroke="#ddd" stroke-width="3" stroke-dasharray="12 10"/>
          <ellipse cx="2742" cy="1504" rx="28" ry="28" fill="none" stroke="#8f3a3a" stroke-width="3" stroke-dasharray="10 34"/>
          <path d="M2742 1450v42M2742 1516v42M2688 1504h42M2754 1504h42" stroke="#2a2a2a" stroke-width="3"/>
        </svg>
        <div class="vr1 d-flex">
          <div class="hb w51 ml14"><svg class="ic"><use href="#v3d"/></svg><svg class="c11"><use href="#dn"/></svg></div>
          <div class="hb w182 ml11 gap-2"><svg class="ic"><use href="#obm"/></svg><span>Object Mode</span><svg class="c11"><use href="#dn"/></svg></div>
          <div class="hm w64 ml12">View</div><div class="hm w78 ml4">Select</div><div class="hm w58 ml4">Add</div><div class="hm w80 ml4">Object</div>
          <div class="hb w50 ml3"><svg class="ic ph"><use href="#bolt"/></svg><svg class="c11"><use href="#dn"/></svg></div>
          <div class="hb w131 ml807 gap-2"><svg class="ic"><use href="#axes"/></svg><span>Global</span><svg class="c11"><use href="#dn"/></svg></div>
          <div class="hb w51 ml11"><svg class="ic"><use href="#pv"/></svg><svg class="c11"><use href="#dn"/></svg></div>
          <div class="hb w84 ml11"><div class="hc w36 cg"><svg class="ic20"><use href="#mg"/></svg></div><div class="hc flex-grow-1"><svg class="ic"><use href="#sg"/></svg><svg class="c11"><use href="#dn"/></svg></div></div>
          <div class="hb w83 ml11"><div class="hc w36 cg"><svg class="ic"><use href="#pf"/></svg></div><div class="hc flex-grow-1 cn"><svg class="ic"><use href="#fo"/></svg><svg class="c11 ph"><use href="#dn"/></svg></div></div>
          <div class="hb w51 ml636"><svg class="ic"><use href="#vs"/></svg><svg class="c11"><use href="#dn"/></svg></div>
          <div class="hb w64 ml11"><div class="hc w36 cb"><svg class="ic"><use href="#gi"/></svg></div><div class="hc flex-grow-1"><svg class="c11"><use href="#dn"/></svg></div></div>
          <div class="hb w64 ml11"><div class="hc w36 cb"><svg class="ic"><use href="#ov"/></svg></div><div class="hc flex-grow-1"><svg class="c11"><use href="#dn"/></svg></div></div>
          <div class="hb w30 ml12 cb"><svg class="ic"><use href="#xr"/></svg></div>
          <div class="hb w160 ml11"><div class="hc w32c cg"><svg class="ic"><use href="#wi"/></svg></div><div class="hc w32c cb"><svg class="ic"><use href="#so"/></svg></div><div class="hc w32c cg"><svg class="ic"><use href="#ma"/></svg></div><div class="hc w32c cg"><svg class="ic"><use href="#rn"/></svg></div><div class="hc flex-grow-1"><svg class="c11"><use href="#dn"/></svg></div></div>
          <div class="hb w30 ml11 cg"><svg class="ic"><use href="#ey"/></svg></div>
          <div class="ml2">
            <div class="d-flex"><div class="xg bl"></div><div class="xg bl">&#8722;</div><div class="xg"><svg class="c14"><use href="#xx"/></svg></div><div class="xg"><svg class="c14"><use href="#xx"/></svg></div><div class="xg"><svg class="c14"><use href="#xx"/></svg></div><div class="xg sp"><svg class="c14"><use href="#xx"/></svg></div><div class="xg"><svg class="c14"><use href="#xx"/></svg></div><div class="xg"><svg class="c14"><use href="#xx"/></svg></div><div class="xg"><svg class="c14"><use href="#xx"/></svg></div><div class="xg"><svg class="c14"><use href="#xx"/></svg></div></div>
            <div class="d-flex"><div class="xg"><svg class="c14"><use href="#xx"/></svg></div><div class="xg ml2"><svg class="c14"><use href="#xx"/></svg></div><div class="xg ml2"><svg class="c14"><use href="#xx"/></svg></div><div class="xg"><svg class="c14"><use href="#xx"/></svg></div><div class="xg"><svg class="c14"><use href="#xx"/></svg></div><div class="xg sp"><svg class="c14"><use href="#xx"/></svg></div><div class="xg"><svg class="c14"><use href="#xx"/></svg></div><div class="xg"><svg class="c14"><use href="#xx"/></svg></div><div class="xg"><svg class="c14"><use href="#xx"/></svg></div><div class="xg"><svg class="c14"><use href="#xx"/></svg></div></div>
          </div>
        </div>
        <div class="vr2 d-flex align-items-center">
          <div class="hb ho w159 ml14"><div class="hc flex-fill cb"><svg class="ic"><use href="#s1"/></svg></div><div class="hc flex-fill cg"><svg class="ic"><use href="#s2"/></svg></div><div class="hc flex-fill cg"><svg class="ic"><use href="#s3"/></svg></div><div class="hc flex-fill cg"><svg class="ic"><use href="#s4"/></svg></div><div class="hc flex-fill cg"><svg class="ic"><use href="#s5"/></svg></div></div>
          <svg class="c12 ml762"><use href="#dn"/></svg>
          <svg class="ic ml4"><use href="#gem"/></svg>
          <div class="hb ho w159 ml10"><div class="hc flex-fill cb"><svg class="ic"><use href="#obm"/></svg></div><div class="hc flex-fill cg"><svg class="ic"><use href="#m2"/></svg></div><div class="hc flex-fill cg"><svg class="ic"><use href="#sc"/></svg></div><div class="hc flex-fill cg"><svg class="ic"><use href="#wd"/></svg></div><div class="hc flex-fill cg"><svg class="ic"><use href="#br"/></svg></div></div>
          <div class="sbx w968 ml3"><svg class="ic ml6"><use href="#sr"/></svg><span class="ph ml13">Search</span></div>
          <div class="hb ho w169 ml4"><div class="hc w30 cg ph"><svg class="c14"><use href="#dn"/></svg></div><div class="hc w34 cg"><svg class="ic"><use href="#bk"/></svg></div><div class="hc w49"><svg class="ic"><use href="#tr"/></svg><svg class="c11"><use href="#dn"/></svg></div><div class="hc flex-grow-1"><svg class="ic"><use href="#fn"/></svg><svg class="c11"><use href="#dn"/></svg></div></div>
          <div class="hb ho w108 ms-auto me-2 pe-1 gap-2"><span>Options</span><svg class="c11"><use href="#dn"/></svg></div>
        </div>
        <div class="stage d-flex">
          <div class="shelf">
            <div class="tg"><div class="tb on crn"><svg class="ic40"><use href="#t1"/></svg></div><div class="tb"><svg class="ic40"><use href="#t2"/></svg></div></div>
            <div class="tg"><div class="tb"><svg class="ic40"><use href="#t3"/></svg></div><div class="tb"><svg class="ic40"><use href="#t4"/></svg></div><div class="tb crn"><svg class="ic40"><use href="#t5"/></svg></div><div class="tb"><svg class="ic40"><use href="#t6"/></svg></div></div>
            <div class="tg"><div class="tb crn"><svg class="ic40"><use href="#t7"/></svg></div><div class="tb"><svg class="ic40"><use href="#t8"/></svg></div></div>
            <div class="tg"><div class="tb crn"><svg class="ic40"><use href="#t9"/></svg></div></div>
          </div>
          <div class="vinfo">User Perspective<br>(1) Scene Collection | Plane</div>
          <svg class="gz" viewBox="4280 340 220 240">
            <circle cx="4314" cy="452" r="19" fill="#4b5534" stroke="#7b9b2c" stroke-width="3"/>
            <circle cx="4431" cy="449" r="19" fill="#4f3a3d" stroke="#a03a47" stroke-width="3"/>
            <circle cx="4381" cy="544" r="20" fill="#3e5069" stroke="#3a78c8" stroke-width="3"/>
            <path d="M4381 400V463" stroke="#3f7fd6" stroke-width="4"/>
            <path d="M4382 463L4331 477" stroke="#d0404f" stroke-width="4"/>
            <path d="M4382 463L4448 474" stroke="#8fc535" stroke-width="4"/>
            <circle cx="4381" cy="381" r="21" fill="#3f85de"/>
            <circle cx="4331" cy="477" r="22" fill="#e8495a"/>
            <circle cx="4448" cy="474" r="21" fill="#8fc735"/>
            <text x="4381" y="389" font-family="Inter" font-size="24" font-weight="800" text-anchor="middle" fill="#123464">Z</text>
            <text x="4331" y="486" font-family="Inter" font-size="24" font-weight="800" text-anchor="middle" fill="#5a1018">X</text>
            <text x="4448" y="483" font-family="Inter" font-size="24" font-weight="800" text-anchor="middle" fill="#30480c">Y</text>
          </svg>
          <div class="gnav">
            <div class="gnb"><svg class="ic28"><use href="#zm"/></svg></div>
            <div class="gnb"><svg class="ic28"><use href="#hd"/></svg></div>
            <div class="gnb"><svg class="ic28"><use href="#cv"/></svg></div>
            <div class="gnb"><svg class="ic28"><use href="#gd"/></svg></div>
          </div>
          <div class="np">
            <div class="pnl">
              <div class="ph1"><svg class="c14 ch"><use href="#dn"/></svg>View<svg class="grip"><use href="#grp"/></svg></div>
              <div class="d-flex mt15"><div class="lab lr w122 flex-shrink-0">Focal Len...</div><div class="f31 fg w163 ml16 flex-shrink-0">50 mm</div></div>
              <div class="d-flex mt6"><div class="lab lr w122 flex-shrink-0">Clip Start</div><div class="f31 fg w163 ml16 flex-shrink-0 rounded-bottom-0">0.1 m</div></div>
              <div class="d-flex"><div class="lab lr w122 flex-shrink-0">End</div><div class="f31 fg w163 ml16 flex-shrink-0 rounded-top-0">100000 m</div></div>
              <div class="d-flex lcam align-items-center"><div class="lab lr w122 flex-shrink-0">Local Cam...</div><div class="cbx ml16"></div><div class="f31 fd lc-f"><svg class="ic20 ph"><use href="#obm"/></svg><span class="ph flex-grow-1 ms-2">Objec</span><svg class="ic20 ph"><use href="#dr"/></svg></div></div>
              <div class="d-flex rreg"><div class="cbx ml138"></div><span class="ml7 lr2">Render Regi...</span></div>
              <div class="vlockh"><svg class="c14"><use href="#dn"/></svg><span>View Lock</span></div>
              <div class="sub vlock">
                <div class="d-flex"><div class="lab lr w122 flex-shrink-0">Lock to O...</div><div class="f31 fd w163 ml16 flex-shrink-0 lkf"><svg class="ic"><use href="#obm"/></svg><span class="ph flex-grow-1 ms-2">Object</span><svg class="ic20"><use href="#dr"/></svg></div></div>
                <div class="d-flex lk1"><div class="lab w122 flex-shrink-0 lr2">Lock</div><div class="cbx ml16"></div><span class="ml7 lr2">To 3D Cursor</span></div>
                <div class="d-flex lk2"><div class="cbx ml138"></div><span class="ml7 lr2">Camera to V...</span></div>
              </div>
            </div>
            <div class="pnl"><div class="ph1"><svg class="c14 ch"><use href="#rt"/></svg>3D Cursor<svg class="grip"><use href="#grp"/></svg></div></div>
            <div class="pnl"><div class="ph1"><svg class="c14 ch"><use href="#rt"/></svg>Collections<svg class="grip"><use href="#grp"/></svg></div></div>
            <div class="pnl"><div class="ph1"><svg class="c14 ch"><use href="#rt"/></svg>Annotations<svg class="grip"><use href="#grp"/></svg></div></div>
            <div class="pnl"><div class="ph1"><svg class="c14 ch"><use href="#rt"/></svg>3D Navigation<svg class="grip"><use href="#grp"/></svg></div></div>
            <div class="pnl"><div class="ph1"><svg class="c14 ch"><use href="#rt"/></svg>Pan Orbit Zoom Roll<svg class="grip"><use href="#grp"/></svg></div></div>
          </div>
          <div class="vtabs">
            <div class="vt">Item</div><div class="vt">Tool</div><div class="vt on">View</div><div class="vt">3D-Print</div><div class="vt">Edit</div><div class="vt">Animate</div><div class="vt">PDT</div><div class="vt">Create</div><div class="vt">Animation</div><div class="vt">Grease Pencil</div><div class="vt">PowerSave</div><div class="vt">Quad Remesh</div><div class="vt">Realtime Materials</div><div class="vt vt-end">Screencast Ke</div>
          </div>
          <svg class="mouse" viewBox="0 0 101 131"><path d="M14 1h73c6 0 13 20 13 50 0 20 0 30-6 50-6 18-20 29-44 29s-38-11-44-29C0 81 0 71 0 51 0 21 8 1 14 1z" fill="none" stroke="#fff" stroke-width="2"/><path d="M1 66h99M34 1v65M67 1v65" stroke="#fff" stroke-width="2"/></svg>
          <div class="rsz"><svg class="c11"><use href="#rt"/></svg>Resize</div>
        </div>
      </div>
      <div class="bl-tl d-flex flex-column">
        <div class="tl-h d-flex">
          <div class="tl-lft d-flex">
            <div class="hb w52 ml13"><svg class="ic"><use href="#tm"/></svg><svg class="c11"><use href="#dn"/></svg></div>
            <div class="hb w224 ml9"><div class="hc w122 gap-2"><span>Playback</span><svg class="c11"><use href="#dn"/></svg></div><div class="hc w102 gap-2"><span>Keying</span><svg class="c11"><use href="#dn"/></svg></div></div>
            <div class="d-flex align-items-center ml18 gap-4 tl-vm"><span>View</span><span>Marker</span></div>
          </div>
          <div class="hb w63"><div class="hc flex-fill cg"><svg class="ic"><use href="#rec"/></svg></div><div class="hc w25 cn ph"><svg class="c11"><use href="#dn"/></svg></div></div>
          <div class="hb w197 ml13 cg"><div class="hc flex-fill"><svg class="ic20"><use href="#jb"/></svg></div><div class="hc flex-fill"><svg class="ic20"><use href="#kb"/></svg></div><div class="hc flex-fill"><svg class="ic"><use href="#pb"/></svg></div><div class="hc flex-fill"><svg class="ic"><use href="#pf2"/></svg></div><div class="hc flex-fill"><svg class="ic20"><use href="#kf"/></svg></div><div class="hc flex-fill"><svg class="ic20"><use href="#jf"/></svg></div></div>
          <div class="ms-auto d-flex gap10 mr13">
            <div class="hb w123 cg">1</div>
            <div class="hb w325 cg"><div class="hc w30"><svg class="ic"><use href="#sw"/></svg></div><div class="hc w152 kw"><span>Start</span><span>1</span></div><div class="hc w143 kw"><span>End</span><span>250</span></div></div>
          </div>
        </div>
        <div class="d-flex flex-grow-1 min-h-0">
          <div class="tl-l">
            <div class="rul d-flex align-items-center">
              <div class="sbx w332 ml3 ho"><svg class="ic ml6"><use href="#sr"/></svg><span class="ph ml13 flex-grow-1">Search</span><div class="hc w40 cg rounded-end"><svg class="ic"><use href="#lr"/></svg></div></div>
            </div>
            <div class="sumr"><svg class="c14"><use href="#dn"/></svg>Summary</div>
          </div>
          <div class="tl-r-col d-flex flex-column">
            <div class="rul d-flex align-items-center flex-none">
              <div class="fr">1</div>
              <div class="rl">10</div><div class="rl">20</div><div class="rl">30</div><div class="rl">40</div><div class="rl">50</div><div class="rl">60</div><div class="rl">70</div><div class="rl">80</div><div class="rl">90</div><div class="rl">100</div><div class="rl">110</div><div class="rl">120</div><div class="rl">130</div><div class="rl">140</div><div class="rl">150</div><div class="rl">160</div><div class="rl">170</div><div class="rl">180</div><div class="rl">190</div><div class="rl">200</div><div class="rl">210</div><div class="rl">220</div><div class="rl">230</div><div class="rl">240</div><div class="rl">250</div>
            </div>
            <div class="tl-b"></div>
            <div class="phd"></div>
            <div class="tsc"></div>
          </div>
        </div>
      </div>
    </div>

    <div class="bl-rc d-flex flex-column">
      <div class="ol">
        <div class="olh d-flex align-items-center">
          <div class="hb w51 ml13"><svg class="ic"><use href="#tr"/></svg><svg class="c11"><use href="#dn"/></svg></div>
          <div class="hb w51 ml9"><svg class="ic"><use href="#ly"/></svg><svg class="c11"><use href="#dn"/></svg></div>
          <div class="sbx w195 olsr"><svg class="ic ml6"><use href="#sr"/></svg><span class="ph ml13">Search</span></div>
          <div class="hb w51 ms-auto"><svg class="ic"><use href="#fo2"/></svg><svg class="c11"><use href="#dn"/></svg></div>
          <div class="hb w32c ml9 cg mr13"><svg class="ic"><use href="#nc"/></svg></div>
        </div>
        <div class="olb">
          <div class="or"><div class="hibox ml33"><svg class="ic"><use href="#co"/></svg></div><span class="ml8">Scene Collection</span></div>
          <div class="or al"><svg class="ic ml71"><use href="#co"/></svg><span class="ml11">Collection</span><div class="orr"><span><svg class="ic"><use href="#ck"/></svg></span><span><svg class="ic"><use href="#ey"/></svg></span><span><svg class="ic"><use href="#cm"/></svg></span></div></div>
          <div class="or dm"><svg class="c12 ml43"><use href="#dn"/></svg><svg class="ic ml16"><use href="#co"/></svg><span class="ml11">Coast defense ship</span><div class="orr"><span><svg class="ic"><use href="#ck"/></svg></span><span class="ph"><svg class="ic"><use href="#eyc"/></svg></span><span><svg class="ic"><use href="#cm"/></svg></span></div></div>
          <div class="or al dm"><span class="vl ml48"></span><svg class="c12 ml28"><use href="#rt"/></svg><svg class="ic ml17"><use href="#em"/></svg><svg class="ic ml16"><use href="#ar"/></svg><span class="ml11">Coast defense ship</span><div class="bn ml41"><svg class="ic"><use href="#tri2"/></svg><i>500</i></div><svg class="ic ml9"><use href="#bu"/></svg><div class="orr"><span></span><span class="ph"><svg class="ic"><use href="#ey"/></svg></span><span><svg class="ic"><use href="#cm"/></svg></span></div></div>
          <div class="or sl"><svg class="c12 ml44"><use href="#rt"/></svg><div class="hibox b ml11"><svg class="ic"><use href="#ti"/></svg></div><span class="ml7">Plane</span><svg class="ic ml41"><use href="#me"/></svg><div class="orr"><span></span><span><svg class="ic"><use href="#ey"/></svg></span><span><svg class="ic"><use href="#cm"/></svg></span></div></div>
        </div>
      </div>
      <div class="pr d-flex flex-column">
        <div class="prh d-flex">
          <div class="hb w51 ml13"><svg class="ic"><use href="#pr"/></svg><svg class="c11"><use href="#dn"/></svg></div>
          <div class="sbx w195 prsr"><svg class="ic ml6"><use href="#sr"/></svg><span class="ph ml13">Search</span></div>
          <div class="hb w32c ms-auto mr13"><svg class="c14"><use href="#dn"/></svg></div>
        </div>
        <div class="d-flex flex-grow-1 min-h-0">
          <div class="prt">
            <div class="pg"><div class="pti"><svg class="ic"><use href="#to"/></svg></div></div>
            <div class="pg"><div class="pti"><svg class="ic"><use href="#rd"/></svg></div><div class="pti"><svg class="ic"><use href="#ou"/></svg></div><div class="pti"><svg class="ic"><use href="#ly"/></svg></div><div class="pti"><svg class="ic"><use href="#sc"/></svg></div><div class="pti on tabw"><svg class="ic"><use href="#wd"/></svg></div></div>
            <div class="pg"><div class="pti"><svg class="ic"><use href="#ob"/></svg></div><div class="pti"><svg class="ic"><use href="#wr"/></svg></div><div class="pti"><svg class="ic"><use href="#pa"/></svg></div><div class="pti"><svg class="ic"><use href="#phy"/></svg></div><div class="pti"><svg class="ic"><use href="#cn"/></svg></div><div class="pti"><svg class="ic"><use href="#meg"/></svg></div><div class="pti"><svg class="ic"><use href="#mt"/></svg></div></div>
            <div class="pg"><div class="pti"><svg class="ic"><use href="#tx"/></svg></div></div>
          </div>
          <div class="prc">
            <div class="bc d-flex align-items-center"><svg class="ic ml5"><use href="#sc"/></svg><span class="ml14">Scene</span><svg class="c14 ml27"><use href="#rt"/></svg><svg class="ic ml14"><use href="#wd"/></svg><span class="ml15">World</span><svg class="ic ms-auto ph"><use href="#pn"/></svg></div>
            <div class="idrow d-flex"><div class="hc w51 cn"><svg class="ic"><use href="#wd"/></svg><svg class="c11"><use href="#dn"/></svg></div><div class="hc fd flex-grow-1 justify-content-start ps-3">World</div><div class="hc w32c ph"><svg class="ic"><use href="#shd"/></svg></div><div class="hc w32c"><svg class="ic"><use href="#cp"/></svg></div><div class="hc w32c"><svg class="c14"><use href="#xx"/></svg></div></div>

            <div class="pnl pnp"><div class="ph1"><svg class="c14 ch"><use href="#rt"/></svg>Preview<svg class="grip"><use href="#grp"/></svg></div></div>
            <div class="pnl pnp">
              <div class="ph1"><svg class="c14 ch"><use href="#dn"/></svg>Surface<svg class="grip"><use href="#grp"/></svg></div>
              <div class="r31 srf1"><div class="lab lr lw241">Surface</div><div class="f31 fd w317 justify-content-start"><span class="dot dg"></span>Background</div></div>
              <div class="r31 srf2 position-relative"><svg class="c14 col-ch"><use href="#rt"/></svg><div class="lab lr lw241">Color</div><div class="f31 w317 justify-content-start colf"><span class="dot dy"></span>abandoned_slipway_4k.exr</div></div>
              <div class="r31 srf3"><div class="lab lr lw241">Strength</div><div class="f31 fg w317 overflow-hidden"><div class="strc"><span class="dot dgr"></span></div><div class="flex-grow-1 text-center">0.200</div></div><span class="sdot"></span></div>
            </div>
            <div class="pnl pnp"><div class="ph1"><svg class="c14 ch"><use href="#rt"/></svg>Volume<svg class="grip"><use href="#grp"/></svg></div></div>
            <div class="pnl pnp"><div class="ph1"><svg class="c14 ch"><use href="#rt"/></svg>Ray Visibility<svg class="grip"><use href="#grp"/></svg></div></div>
            <div class="pnl pnp">
              <div class="ph1 sth"><svg class="c14 ch"><use href="#dn"/></svg>Settings<svg class="grip"><use href="#grp"/></svg></div>
              <div class="sh"><svg class="c14"><use href="#dn"/></svg>Surface</div>
              <div class="sub sb1">
                <div class="r31"><div class="lab lr lw254">Sampling</div><div class="f31 fd w338 drp">Auto<svg class="c11"><use href="#dn"/></svg></div></div>
                <div class="r31 mt5 dim3"><div class="lab lr lw254">Map Resolution</div><div class="f31 fg w338">1024</div></div>
                <div class="r31 mt5"><div class="lab lr lw254">Max Bounces</div><div class="f31 fg w338">1024</div></div>
                <div class="d-flex align-items-center chk"><div class="cbx on"><svg class="c14"><use href="#ckw"/></svg></div><span class="ml7">Shadow Caustics</span></div>
              </div>
              <div class="sh sh2"><svg class="c14"><use href="#dn"/></svg>Volume</div>
              <div class="sub sb2">
                <div class="r31"><div class="lab lr lw254">Sampling</div><div class="f31 fd w338 drp">Equiangular<svg class="c11"><use href="#dn"/></svg></div></div>
                <div class="r31 mt5"><div class="lab lr lw254">Interpolation</div><div class="f31 fd w338 drp">Linear<svg class="c11"><use href="#dn"/></svg></div></div>
                <div class="d-flex align-items-center chk2"><div class="cbx"></div><span class="ml7">Homogeneous</span></div>
                <div class="r31 mt10"><div class="lab lr lw254">Step Size</div><div class="f31 fg w338">1.0000</div></div>
              </div>
              <div class="sh sh3"><svg class="c14"><use href="#dn"/></svg>Light Group</div>
              <div class="sub sb3">
                <div class="r31"><div class="lab lr lw241">Light Group</div><div class="f31 fd w317 rounded-end-0 justify-content-start"><span class="lgdot"></span></div><div class="f31 cgp rounded-start-0"><svg class="c14"><use href="#pls"/></svg></div></div>
              </div>
            </div>
            <div class="pnl pnp"><div class="ph1"><svg class="c14 ch"><use href="#rt"/></svg>Viewport Display<svg class="grip"><use href="#grp"/></svg></div></div>
            <div class="pnl pnp"><div class="ph1"><svg class="c14 ch"><use href="#rt"/></svg>Custom Properties<svg class="grip"><use href="#grp"/></svg></div></div>
          </div>
        </div>
      </div>
    </div>
  </div>

  <div class="bl-st d-flex align-items-center">
    <svg class="ic ml18"><use href="#ms"/></svg><span class="ml14 st1">Select</span>
    <svg class="ic"><use href="#ms"/></svg><span class="ml12 st3">Rotate View</span>
    <svg class="ic"><use href="#ms"/></svg><span class="ml17">Object</span>
    <span class="ms-auto mr16">Scene Collection | Plane | Verts:4 | Faces:1 | Tris:2 | Objects:1/1 | Duration: 00:08+10 (Frame 1/250) | Memory: 565.2 MiB | 4.1.1</span>
  </div>

  <svg class="arrows" viewBox="113 75 6015 3335" preserveAspectRatio="none">
    <g fill="#ee4218">
      <polygon points="4780,513 4749,588 4733,567 4662,631 4651,622 4720,555 4702,534"/>
      <polygon points="4807,573 4776,650 4762,630 4686,690 4677,681 4747,622 4728,595"/>
      <polygon points="5072,650 5160,662 5135,685 5295,755 5285,765 5118,700 5095,735"/>
      <polygon points="6020,398 5991,475 5971,453 5901,518 5890,508 5959,438 5942,420"/>
    </g>
  </svg>
</div>
<script>
(function(){
  var g=document.getElementById('gridl'),ns='http://www.w3.org/2000/svg';
  function fan(vx,a,b){for(var x=a;x<b;x+=230){var l=document.createElementNS(ns,'line');l.setAttribute('x1',vx);l.setAttribute('y1',800);l.setAttribute('x2',x);l.setAttribute('y2',2735);l.setAttribute('stroke','url(#gl)');l.setAttribute('stroke-width','2');g.appendChild(l);}}
  fan(4545,-30000,4545);fan(-1600,-1600,34000);
})();
</script>
</body>
</html>
